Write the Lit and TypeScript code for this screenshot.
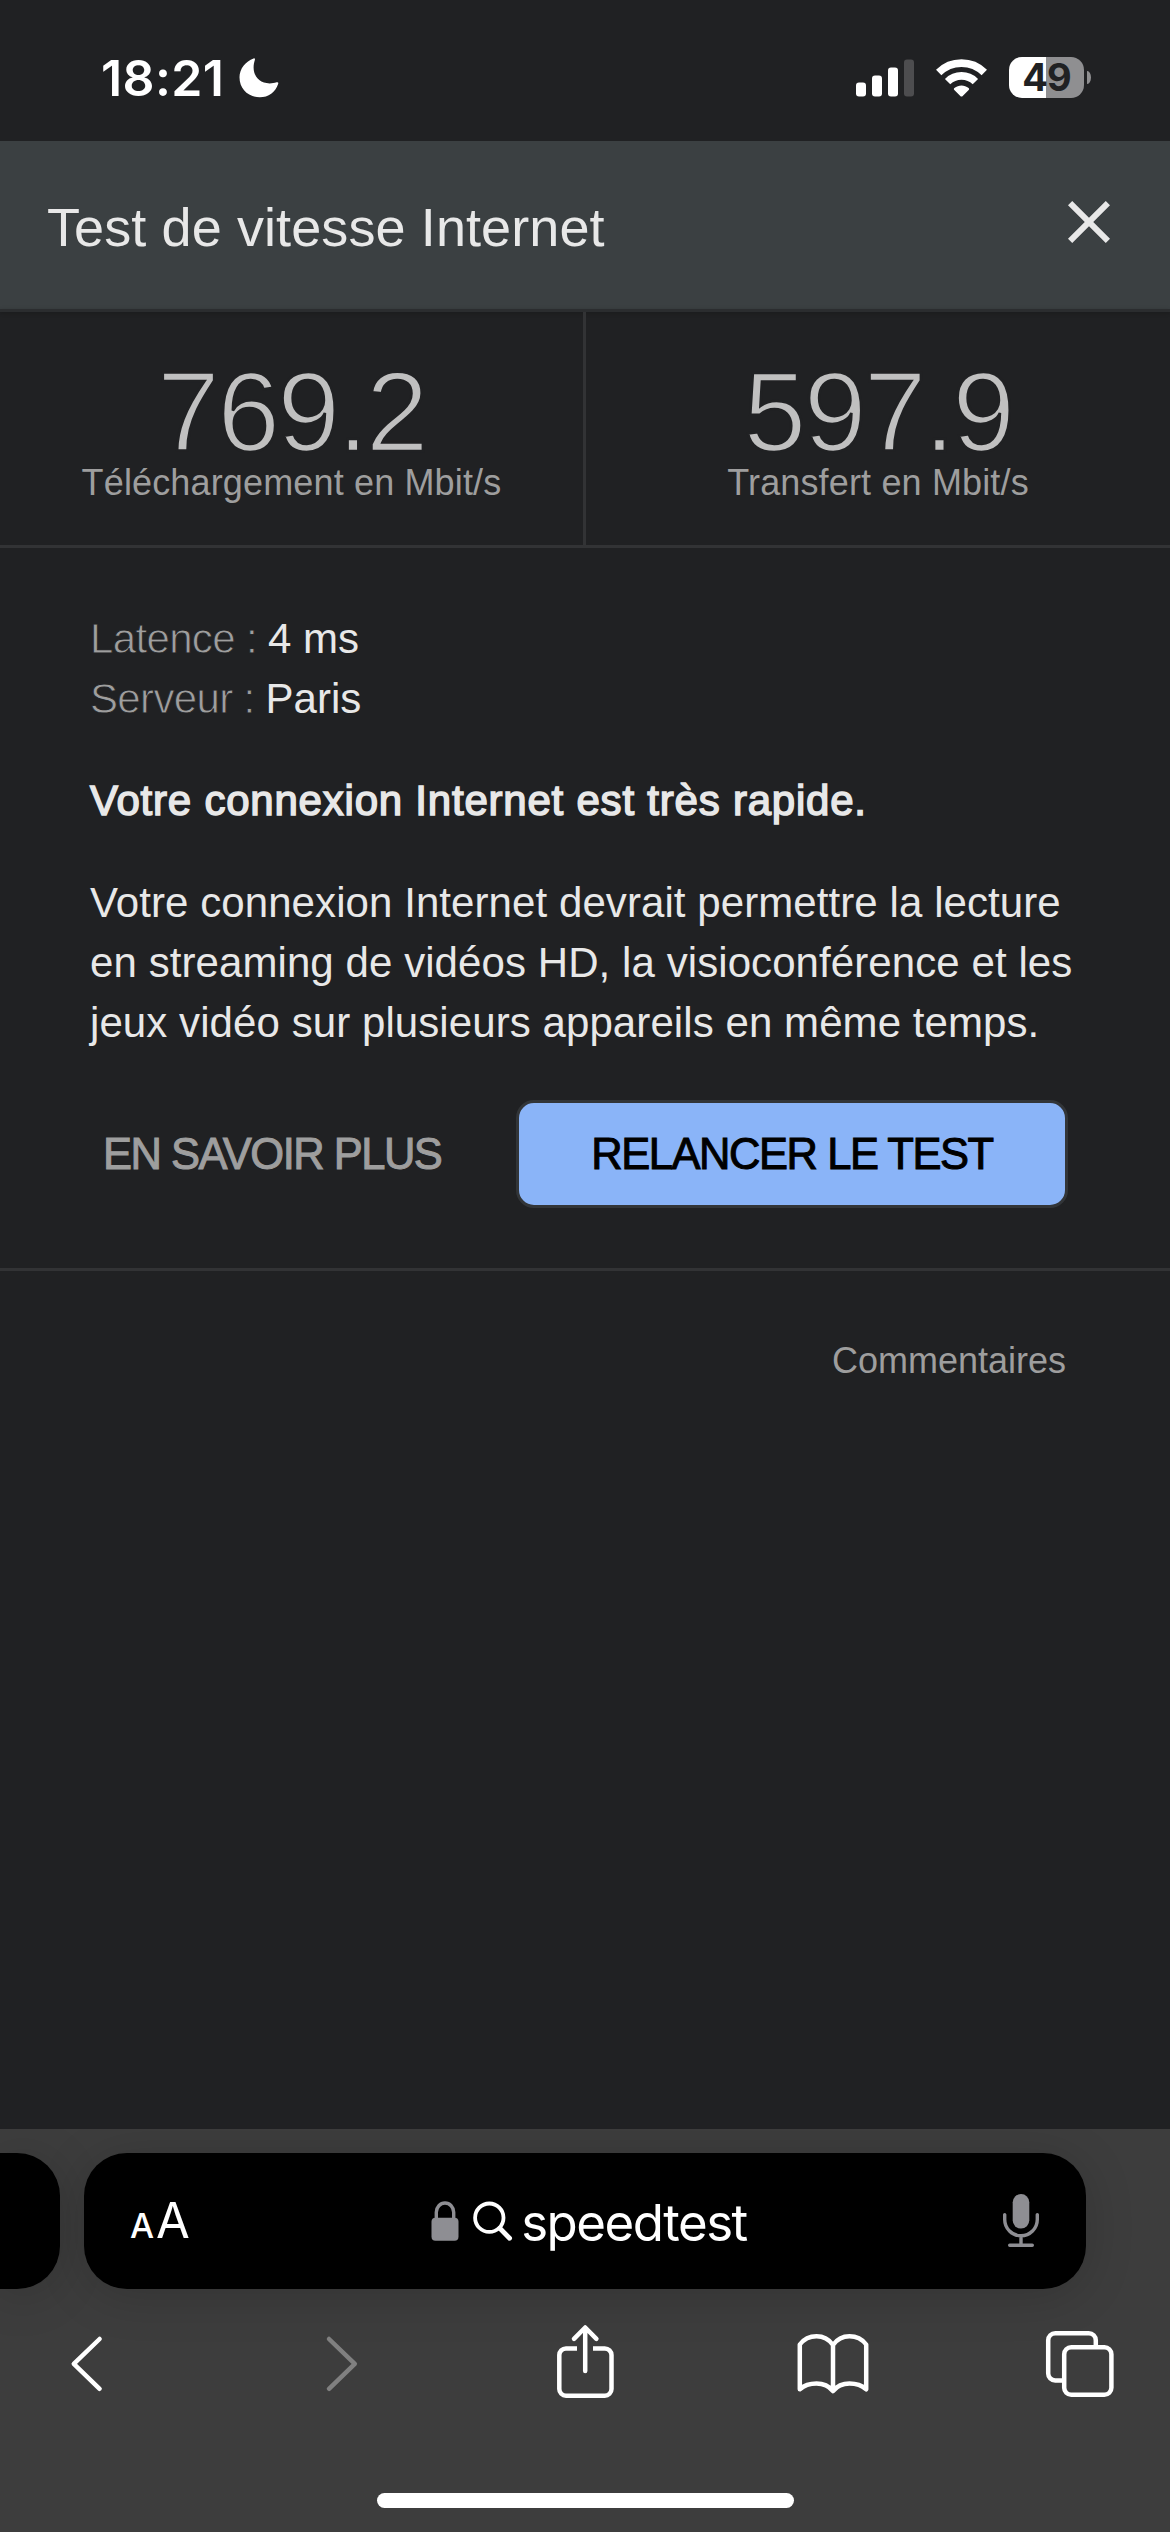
import { LitElement, html, css, svg } from "lit";
import { customElement, property } from "lit/decorators.js";

@customElement("status-bar")
class StatusBar extends LitElement {
  static styles = css`
    :host {
      display: flex;
      align-items: center;
      height: 141px;
      box-sizing: border-box;
      padding: 14px 79px 0 101px;
      font-family: Inter, "Liberation Sans", sans-serif;
      color: #fff;
    }
    .time {
      font-size: 50px;
      font-weight: 600;
      line-height: 60px;
      letter-spacing: 0.4px;
    }
    .moon {
      margin-left: 15px;
    }
    .spacer {
      flex: 1;
    }
    .wifi {
      margin: 0 22px;
    }
    .battery {
      display: flex;
      align-items: center;
      gap: 3px;
    }
    .cell {
      width: 75px;
      height: 41px;
      border-radius: 13px;
      background: linear-gradient(90deg, #fff 37px, #8f8f91 37px);
      color: #202123;
      font-size: 38px;
      font-weight: 700;
      line-height: 41px;
      text-align: center;
      letter-spacing: -1px;
    }
    .nub {
      width: 4px;
      height: 13px;
      border-radius: 0 4px 4px 0 / 0 7px 7px 0;
      background: #8f8f91;
    }
    svg {
      display: block;
    }
  `;
  render() {
    return html`
      <span class="time">18:21</span>
      <svg class="moon" width="40" height="40" viewBox="0 0 40 40">
        <path fill="#fff" d="M14.6.4c.9-.4 1.6.2 1.3 1.3-.8 2.600-1.300 5-1.300 7.700 0 9.400 6.400 16 16 16 2.700 0 4.800-.4 7-1.100 1.300-.4 2 .2 1.600 1.400C36.500 34 29.500 39.300 20.800 39.300 9 39.300.5 30.800.5 19.300.5 10.600 6.600 3.200 14.600.4z"/>
      </svg>
      <span class="spacer"></span>
      <svg width="58" height="38" viewBox="0 0 58 38" fill="#fff">
        <rect x="0" y="23.500" width="10" height="14" rx="3"/>
        <rect x="16" y="16.500" width="10" height="21" rx="3"/>
        <rect x="32" y="8.500" width="10" height="29" rx="3"/>
        <rect x="48" y="0.500" width="10" height="37" rx="3" fill="#4d4d4f"/>
      </svg>
      <svg class="wifi" width="51" height="38" viewBox="0 0 51 38" fill="none" stroke="#fff">
        <path stroke-width="7.600" d="M2.700 13.500a32.400 32.400 0 0 1 45.600 0"/>
        <path stroke-width="7.600" d="M11.600 22.600a19.800 19.800 0 0 1 27.800 0"/>
        <path fill="#fff" stroke="none" d="M25.500 37.600c-.5 0-.8-.2-1.200-.6l-6-6.100c-.6-.6-.6-1.300.1-1.900 4.200-3.500 10-3.500 14.200 0 .7.600.7 1.300.1 1.900l-6 6.100c-.4.4-.7.600-1.200.6z"/>
      </svg>
      <div class="battery"><div class="cell">49</div><div class="nub"></div></div>
    `;
  }
}

@customElement("speed-stat")
class SpeedStat extends LitElement {
  @property() value = "";
  @property() label = "";
  static styles = css`
    :host {
      display: flex;
      flex-direction: column;
      align-items: center;
      padding-top: 40px;
      height: 233px;
      box-sizing: border-box;
    }
    .value {
      font-size: 113px;
      line-height: 120px;
      height: 113px;
      color: #c0c0c0;
      letter-spacing: -2.8px;
      -webkit-text-stroke: 2.6px #202123;
    }
    .label {
      font-size: 36px;
      line-height: 36px;
      letter-spacing: 0.15px;
      color: #9e9e9e;
      white-space: nowrap;
    }
  `;
  render() {
    return html`<span class="value">${this.value}</span><span class="label">${this.label}</span>`;
  }
}

@customElement("speed-test")
class SpeedTest extends LitElement {
  static styles = css`
    :host {
      display: block;
      flex: 1;
      font-family: "Liberation Sans", Arial, sans-serif;
    }
    .header {
      display: flex;
      justify-content: space-between;
      align-items: center;
      height: 168px;
      box-sizing: border-box;
      padding: 4px 45px 0 47px;
      background: #3b4042;
      color: #e8e8e8;
      font-size: 54px;
      line-height: 64px;
      letter-spacing: 0.1px;
    }
    .close {
      display: block;
      margin-bottom: 10px;
    }
    .edge {
      height: 3px;
      background: #2b2d2f;
      box-shadow: 0 1px 4px rgba(0, 0, 0, 0.25);
    }
    .stats {
      display: grid;
      grid-template-columns: 583px 1fr;
      border-bottom: 3px solid #323335;
    }
    .stats speed-stat + speed-stat {
      border-left: 3px solid #323335;
    }
    .body {
      padding: 61px 90px 60px;
      border-bottom: 3px solid #323335;
      font-size: 42px;
      line-height: 60px;
      color: #e8e8e8;
    }
    .key {
      color: #9e9e9e;
      letter-spacing: -0.65px;
      -webkit-text-stroke: 0.8px #202123;
    }
    .verdict,
    .detail {
      margin: 42px 0 0;
      white-space: nowrap;
    }
    .verdict {
      -webkit-text-stroke: 1.5px #e8e8e8;
      letter-spacing: 0.78px;
    }
    .detail {
      letter-spacing: 0.08px;
    }
    .actions {
      display: flex;
      justify-content: space-between;
      align-items: center;
      margin: 47px 12px 0 0;
      font-size: 43.5px;
    }
    .more {
      padding-left: 13px;
      color: #9e9e9e;
      -webkit-text-stroke: 1px #9e9e9e;
      letter-spacing: -1.5px;
    }
    .rerun {
      display: flex;
      justify-content: center;
      align-items: center;
      width: 552px;
      height: 108px;
      box-sizing: border-box;
      border: 3px solid #323538;
      border-radius: 18px;
      background: #8ab4f8;
      color: #000;
      -webkit-text-stroke: 1px #000;
      letter-spacing: -1.45px;
    }
    .feedback {
      padding: 69px 104px 0 0;
      text-align: right;
      font-size: 36px;
      line-height: 42px;
      color: #9e9e9e;
    }
  `;
  render() {
    return html`
      <div class="header">
        <span>Test de vitesse Internet</span>
        <svg class="close" width="72" height="72" viewBox="0 0 24 24" fill="#e8e8e8">
          <path d="M19 6.410L17.590 5 12 10.590 6.410 5 5 6.410 10.590 12 5 17.590 6.410 19 12 13.410 17.590 19 19 17.590 13.410 12z"/>
        </svg>
      </div>
      <div class="edge"></div>
      <div class="stats">
        <speed-stat value="769.2" label="Téléchargement en Mbit/s"></speed-stat>
        <speed-stat value="597.9" label="Transfert en Mbit/s"></speed-stat>
      </div>
      <div class="body">
        <div><span class="key">Latence : </span>4 ms</div>
        <div><span class="key">Serveur : </span>Paris</div>
        <p class="verdict">Votre connexion Internet est très rapide.</p>
        <p class="detail">Votre connexion Internet devrait permettre la lecture<br>en streaming de vidéos HD, la visioconférence et les<br>jeux vidéo sur plusieurs appareils en même temps.</p>
        <div class="actions">
          <span class="more">EN SAVOIR PLUS</span>
          <span class="rerun">RELANCER LE TEST</span>
        </div>
      </div>
      <div class="feedback">Commentaires</div>
    `;
  }
}

const toolIcons = [
  { tone: "#fff", art: svg`<path d="M53.600 19L27.800 43.900 53.600 68.800"/>` },
  { tone: "#808080", art: svg`<path d="M34 19L59.800 43.900 34 68.800"/>` },
  {
    tone: "#fff",
    art: svg`<path stroke-linecap="butt" d="M34 28.400H23a6.700 6.700 0 0 0-6.700 6.700V69a6.700 6.700 0 0 0 6.700 6.700h38.800a6.700 6.700 0 0 0 6.700-6.700V35.100a6.700 6.700 0 0 0-6.700-6.700H50"/><path d="M42.200 51V8M31 18.800L42.200 7.500 53.400 18.800"/>`,
  },
  {
    tone: "#fff",
    art: svg`<path d="M41 71V25C37 19.300 31 16.300 24.500 16.300S12 19 7.800 24.500V69.300C12 65.500 18 63.500 24.500 63.500S37 66 41 71C45 66 51 63.500 57.500 63.500S70 65.500 74.200 69.300V24.500C70 19 64 16.300 57.500 16.300S45 19.300 41 25"/>`,
  },
  {
    tone: "#fff",
    art: svg`<path stroke-linecap="butt" d="M22 60.500h-6.800a7 7 0 0 1-7-7V20.200a7 7 0 0 1 7-7h33.600a7 7 0 0 1 7 7V26"/><rect x="24.200" y="27.200" width="47.200" height="47.600" rx="7"/>`,
  },
];

@customElement("browser-bar")
class BrowserBar extends LitElement {
  static styles = css`
    :host {
      display: flex;
      flex-direction: column;
      height: 403px;
      box-sizing: border-box;
      padding-top: 24px;
      background: #3d3d3d;
      overflow: hidden;
      font-family: Inter, "Liberation Sans", sans-serif;
      color: #fff;
    }
    .tabs {
      display: flex;
      gap: 24px;
      height: 136px;
    }
    .previous,
    .address {
      background: #000;
      box-shadow: 0 6px 50px rgba(0, 0, 0, 0.16);
    }
    .previous {
      width: 60px;
      border-radius: 0 43px 43px 0;
    }
    .address {
      display: grid;
      grid-template-columns: 1fr auto 1fr;
      align-items: center;
      width: 1002px;
      box-sizing: border-box;
      padding: 0 47px 0 46px;
      border-radius: 43px;
    }
    .reader {
      display: flex;
      align-items: baseline;
      gap: 2px;
      line-height: 60px;
      padding-top: 4px;
    }
    .small {
      font-size: 34px;
      font-weight: 500;
    }
    .large {
      font-size: 49px;
    }
    .query {
      display: flex;
      align-items: center;
      margin-left: 9px;
      font-size: 51px;
      line-height: 60px;
      letter-spacing: -1.5px;
    }
    .word {
      margin-left: 8px;
      padding-top: 3px;
    }
    .glass {
      margin-left: 14px;
    }
    .mic {
      justify-self: end;
    }
    .tools {
      display: flex;
      justify-content: space-between;
      padding: 31px 50px 0 46px;
    }
    .home {
      width: 417px;
      height: 15px;
      margin: 83px 0 0 377px;
      border-radius: 8px;
      background: #fff;
    }
    svg {
      display: block;
    }
  `;
  render() {
    return html`
      <div class="tabs">
        <div class="previous"></div>
        <div class="address">
          <div class="reader"><span class="small">A</span><span class="large">A</span></div>
          <div class="query">
            <svg width="28" height="40" viewBox="0 0 28 40">
              <rect x="0.500" y="16.800" width="27" height="23" rx="4" fill="#8e8e93"/>
              <path d="M5.300 18V11.300a8.700 9.300 0 0 1 17.400 0V18" fill="none" stroke="#8e8e93" stroke-width="3.400"/>
            </svg>
            <svg class="glass" width="40" height="40" viewBox="0 0 40 40" fill="none" stroke="#fff" stroke-linecap="round">
              <circle cx="16.300" cy="16.700" r="14.200" stroke-width="3.800"/>
              <path d="M26.800 27.300L36.600 37.300" stroke-width="4.800"/>
            </svg>
            <span class="word">speedtest</span>
          </div>
          <svg class="mic" width="36" height="54" viewBox="0 0 36 54" fill="none" stroke="#8e8e93" stroke-width="3.400" stroke-linecap="round">
            <rect x="9.700" y="0" width="16.600" height="34.600" rx="8.300" fill="#8e8e93" stroke="none"/>
            <path d="M1.700 20.600V25.500a16.300 16.300 0 0 0 32.600 0V20.600M18 42V51M6.700 51.300H29.300"/>
          </svg>
        </div>
      </div>
      <div class="tools">
        ${toolIcons.map(
          (icon) => html`<svg width="80" height="90" viewBox="0 0 80 90" fill="none" stroke=${icon.tone} stroke-width="4.500" stroke-linecap="round" stroke-linejoin="round">${icon.art}</svg>`
        )}
      </div>
      <div class="home"></div>
    `;
  }
}

@customElement("app-root")
class AppRoot extends LitElement {
  static styles = css`
    :host {
      display: flex;
      flex-direction: column;
      width: 1170px;
      height: 2532px;
      overflow: hidden;
      background: #202123;
    }
  `;
  render() {
    return html`
      <status-bar></status-bar>
      <speed-test></speed-test>
      <browser-bar></browser-bar>
    `;
  }
}
